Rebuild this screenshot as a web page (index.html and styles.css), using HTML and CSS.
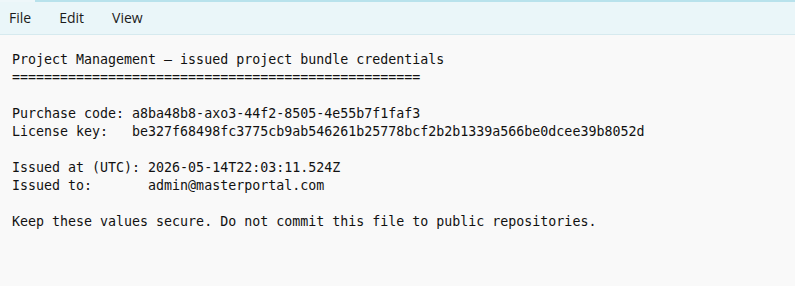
FILE: index.html
```html
<!DOCTYPE html>
<html>
<head>
<meta charset="utf-8">
<link rel="stylesheet" href="styles.css">
</head>
<body>
<div class="window">
  <div class="topline"><span class="topline-tab"></span></div>
  <nav class="menubar">
    <span class="menu-item">File</span>
    <span class="menu-item">Edit</span>
    <span class="menu-item">View</span>
  </nav>
  <pre class="editor">Project Management — issued project bundle credentials
===================================================

Purchase code: a8ba48b8-axo3-44f2-8505-4e55b7f1faf3
License key:   be327f68498fc3775cb9ab546261b25778bcf2b2b1339a566be0dcee39b8052d

Issued at (UTC): 2026-05-14T22:03:11.524Z
Issued to:       admin@masterportal.com

Keep these values secure. Do not commit this file to public repositories.</pre>
</div>
</body>
</html>
```
FILE: styles.css
```css
html, body {
  margin: 0;
  padding: 0;
  background: #f9f9f9;
}
.window {
  width: 795px;
  height: 286px;
  display: flex;
  flex-direction: column;
  overflow: hidden;
}
.topline {
  height: 2px;
  background: #b8e2ec;
  display: flex;
}
.topline-tab {
  width: 35px;
  background: #eef7fa;
}
.menubar {
  height: 32px;
  background: #eaf6f9;
  border-bottom: 1px solid #d6eaef;
  display: flex;
  align-items: center;
  padding-left: 9px;
  gap: 28px;
  font-family: "Open Sans", "Noto Sans", sans-serif;
  font-size: 14px;
  color: #1b1b1b;
}
.menu-item {
  line-height: 20px;
}
.editor {
  margin: 0;
  padding: 16px 12px 0 12px;
  font-family: "DejaVu Sans Mono", monospace;
  font-size: 13.3px;
  line-height: 18px;
  color: #111;
  white-space: pre;
}
```
